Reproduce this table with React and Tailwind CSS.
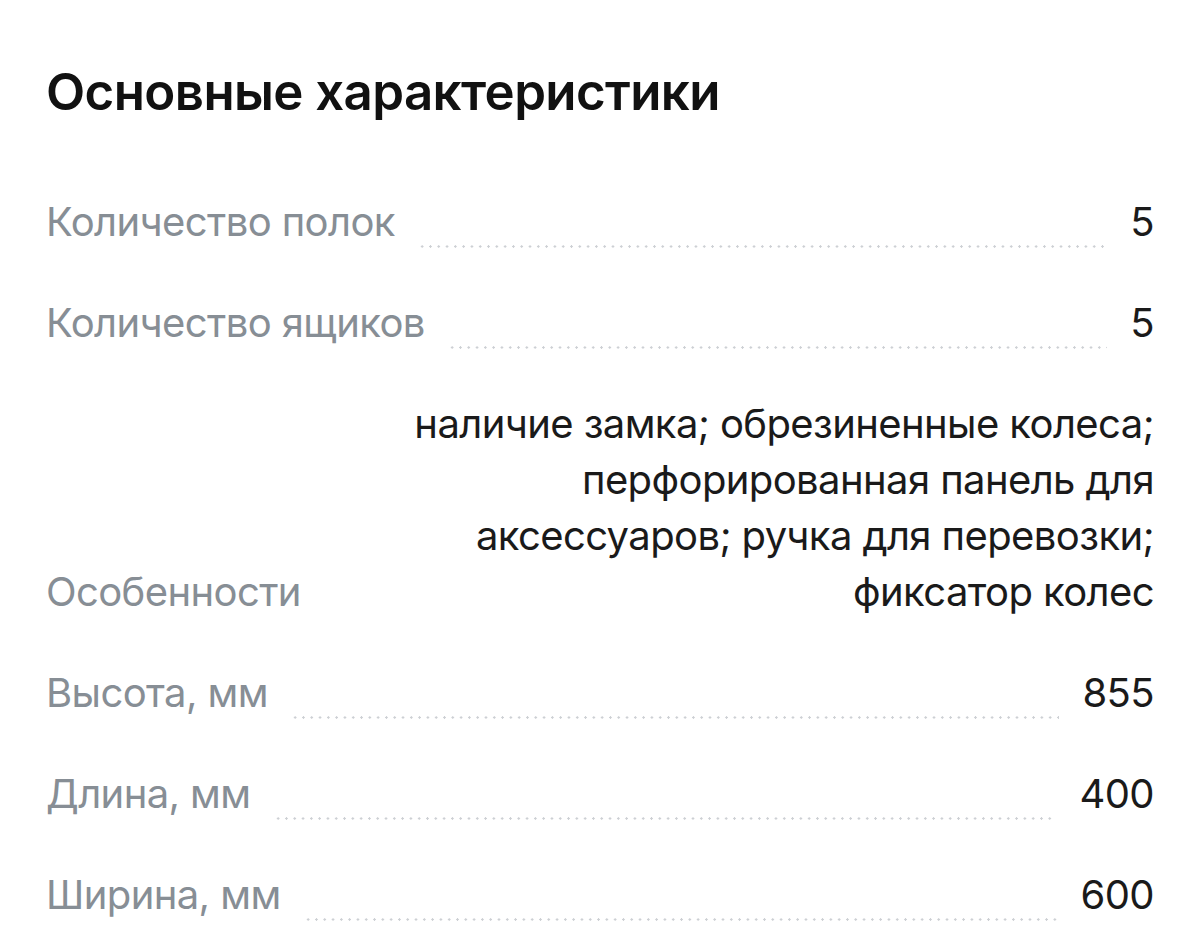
const rows = [
  { label: 'Количество полок', value: '5' },
  { label: 'Количество ящиков', value: '5' },
  {
    label: 'Особенности',
    value: 'наличие замка; обрезиненные колеса; перфорированная панель для аксессуаров; ручка для перевозки; фиксатор колес',
    multi: true,
  },
  { label: 'Высота, мм', value: '855' },
  { label: 'Длина, мм', value: '400' },
  { label: 'Ширина, мм', value: '600' },
];

const Row = ({ label, value, multi }) => {
  if (multi) {
    return (
      <div className="flex items-end justify-between gap-6">
        <span className="shrink-0 text-[#878e95]">{label}</span>
        <span className="max-w-[750px] text-right text-[#1a1a1a]">{value}</span>
      </div>
    );
  }
  return (
    <div className="flex items-end">
      <span className="shrink-0 text-[#878e95]">{label}</span>
      <div className="mx-[23px] mb-[2px] h-[3px] flex-1 bg-[radial-gradient(circle,#cdd0d4_1px,transparent_1.4px)] bg-[length:8.3px_3px] bg-repeat-x" />
      <span className="shrink-0 text-[#1a1a1a]">{value}</span>
    </div>
  );
};

export default function App() {
  return (
    <div className="min-h-[951px] bg-white px-[46px] pt-[64px] font-['Inter','Liberation_Sans',sans-serif]">
      <h2 className="text-[51px] leading-[56px] font-semibold tracking-[-0.6px] text-[#111]">
        Основные характеристики
      </h2>
      <div className="mt-[74px] flex flex-col gap-[45px] text-[40px] leading-[56px] tracking-[-0.6px]">
        {rows.map((r) => (
          <Row key={r.label} {...r} />
        ))}
      </div>
    </div>
  );
}
